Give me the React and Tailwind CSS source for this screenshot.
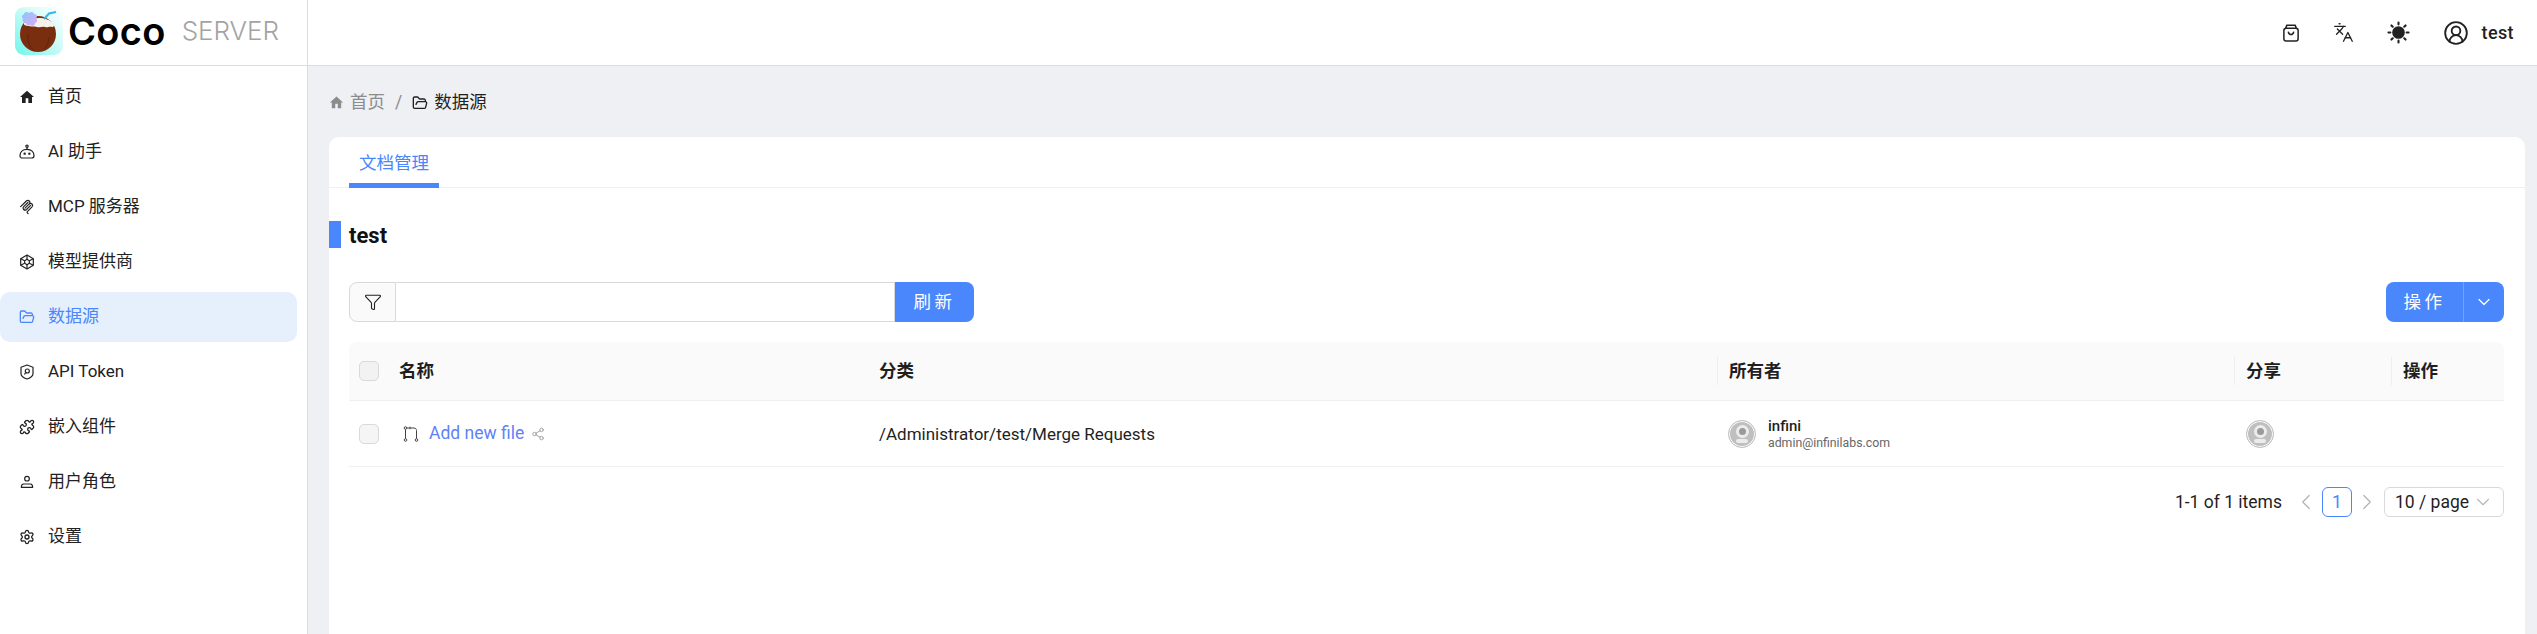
import React from 'react'
import { FolderOpen, Settings, Languages, CircleUserRound, Share2, ChevronLeft, ChevronRight, ChevronDown, Funnel, Puzzle } from 'lucide-react'

const FONT = 'font-["Roboto","Noto_Sans_CJK_SC",sans-serif]'

const HomeIcon = ({ className }) => (
  <svg viewBox="0 0 24 24" className={className} fill="currentColor">
    <path d="M10 21v-7h4v7h5.500v-9H22.500L12 2.500 1.500 12h3v9z" />
  </svg>
)

const BotIcon = ({ className }) => (
  <svg viewBox="0 0 24 24" className={className} fill="none" stroke="currentColor" strokeWidth="1.800">
    <circle cx="12" cy="3.500" r="1.700" />
    <path d="M12 5.200v2.800" />
    <path d="M5 21a3.500 3.500 0 0 1-3.500-3.500C1.500 12 5.500 8 12 8s10.500 4 10.500 9.500A3.500 3.500 0 0 1 19 21z" strokeLinejoin="round" />
    <circle cx="8.500" cy="14.500" r="1.800" fill="currentColor" stroke="none" />
    <circle cx="15.500" cy="14.500" r="1.800" fill="currentColor" stroke="none" />
  </svg>
)

const McpIcon = ({ className }) => (
  <svg viewBox="0 0 24 24" className={className} fill="none" stroke="currentColor" strokeWidth="1.800" strokeLinecap="round" strokeLinejoin="round">
    <path d="M2.500 11.500 11 3c1.300-1.200 3.200-1.200 4.400 0 1.200 1.200 1.200 3 0 4.300L9 13.700" />
    <path d="M15.400 7.300c1.300-1 3-.9 4.100.200 1.200 1.200 1.200 3 0 4.300L12.500 19c-.5.500-.5 1.200 0 1.700l1.200 1.200" />
    <path d="M13.300 5.200 7 11.500c-1.200 1.200-1.200 3 0 4.300 1.200 1.200 3 1.200 4.300 0l6.100-6.200" />
  </svg>
)

const ModelIcon = ({ className }) => (
  <svg viewBox="0 0 24 24" className={className} fill="none" stroke="currentColor" strokeWidth="1.800" strokeLinejoin="round">
    <path d="M12 1.500 21.500 7v10L12 22.500 2.500 17V7z" />
    <path d="M12 8 15.500 10v4L12 16l-3.500-2v-4z" />
    <path d="M12 1.500V8M21.500 7l-6 3M21.500 17l-6-3M12 22.500V16M2.500 17l6-3M2.500 7l6 3" />
  </svg>
)

const TokenIcon = ({ className }) => (
  <svg viewBox="0 0 24 24" className={className} fill="none" stroke="currentColor" strokeWidth="1.800" strokeLinejoin="round" strokeLinecap="round">
    <path d="M12 1.500 21 4.800v9.700c0 3.500-4 6.300-9 8-5-1.700-9-4.500-9-8V4.800z" />
    <circle cx="12.500" cy="10.500" r="3" />
    <path d="M10.300 12.700 8.500 15" />
  </svg>
)

const RoleIcon = ({ className }) => (
  <svg viewBox="0 0 24 24" className={className} fill="none" stroke="currentColor" strokeWidth="1.800">
    <circle cx="12" cy="7" r="3.500" />
    <path d="M3.500 20c0-3 1-5 3.500-5h10c2.500 0 3.500 2 3.500 5z" strokeLinejoin="round" />
  </svg>
)

const BagIcon = ({ className }) => (
  <svg viewBox="0 0 24 24" className={className} fill="none" stroke="currentColor" strokeWidth="2" strokeLinecap="round" strokeLinejoin="round">
    <rect x="2.500" y="5.500" width="19" height="17" rx="3" />
    <path d="M5 5.500 6.500 1.500h11L19 5.500" />
    <path d="M8.500 11c.5 2 2 3 3.500 3s3-1 3.500-3" />
  </svg>
)

const SunIcon = ({ className }) => (
  <svg viewBox="0 0 24 24" className={className} fill="currentColor" stroke="currentColor" strokeWidth="2.200" strokeLinecap="round">
    <circle cx="12" cy="12" r="5.500" />
    <path d="M12 1.500v2M12 20.500v2M1.500 12h2M20.500 12h2M4.600 4.600 6 6M18 18l1.400 1.400M4.600 19.400 6 18M18 6l1.400-1.400" fill="none" />
  </svg>
)

const MergeIcon = ({ className }) => (
  <svg viewBox="0 0 16 16" className={className} fill="none" stroke="currentColor" strokeWidth="1">
    <circle cx="2.500" cy="2" r="1.300" />
    <circle cx="2.500" cy="14" r="1.300" />
    <circle cx="13.500" cy="14" r="1.300" />
    <path d="M2.500 3.300v9.400M13.500 12.700V4.500c0-1.500-1-2.500-2.500-2.500H3.800" />
    <path d="M7 .7v2.600" />
  </svg>
)

const Logo = () => (
  <svg viewBox="0 0 48 48" className="h-12 w-12 shrink-0">
    <defs>
      <linearGradient id="logoBg" x1="0" y1="1" x2="1" y2="0">
        <stop offset="0" stopColor="#6ff5ea" />
        <stop offset="0.6" stopColor="#d5fbf8" />
        <stop offset="1" stopColor="#ffffff" />
      </linearGradient>
      <linearGradient id="logoFlower" x1="0" y1="0" x2="1" y2="1">
        <stop offset="0" stopColor="#8ec8fb" />
        <stop offset="1" stopColor="#d9a8f7" />
      </linearGradient>
    </defs>
    <rect x="0" y="0" width="48" height="48" rx="9" fill="url(#logoBg)" />
    <circle cx="23" cy="27" r="18" fill="#7a2e10" />
    <path d="M9 16c4-3 9-5 15-5 6 0 11 2 14 5 2 2 1 4-1 4-3-1-4 1-7 0-3-1-5 1-8 0s-5 0-8-1c-3 0-6-1-5-3z" fill="#f6f1ea" />
    <path d="M19 44c-5-5-7-11-6-17M29 43c3-4 5-8 5-13" stroke="#5b200a" strokeWidth="0.8" fill="none" />
    <path d="M9 7c1-3 4-2 5-1 2-2 5-1 5 1 3 0 4 3 2 4 2 2 1 5-1 5 0 3-3 4-5 2-2 1-4 0-4-2-3 0-4-3-3-4-2-2-1-4 1-5z" fill="url(#logoFlower)" />
    <path d="M29 12 34 6.500 41 5" stroke="#35b8f0" strokeWidth="2" fill="none" />
  </svg>
)

const Avatar = () => (
  <div className="relative flex h-7 w-7 items-center justify-center overflow-hidden rounded-full border border-[#c4c4c4] bg-[#bfbfbf] ring-1 ring-white ring-inset">
    <div className="mb-1 h-[13px] w-[13px] rounded-full border-[3px] border-[#ececec] bg-[#9a9a9a]" />
    <div className="absolute bottom-1 h-1 w-3 rounded-sm bg-[#ececec]" />
  </div>
)

const menu = [
  { label: '首页', icon: HomeIcon },
  { label: 'AI 助手', icon: BotIcon },
  { label: 'MCP 服务器', icon: McpIcon },
  { label: '模型提供商', icon: ModelIcon },
  { label: '数据源', icon: FolderOpen, active: true },
  { label: 'API Token', icon: TokenIcon },
  { label: '嵌入组件', icon: Puzzle },
  { label: '用户角色', icon: RoleIcon },
  { label: '设置', icon: Settings },
]

const App = () => {
  return (
    <div className={`flex h-[634px] w-full overflow-hidden bg-[#eef0f4] text-[#1f1f1f] ${FONT}`}>
      {/* Sidebar */}
      <aside className="flex w-[308px] shrink-0 flex-col border-r border-[#dcdcdc] bg-white">
        <div className="flex h-[66px] shrink-0 items-center border-b border-[#dcdcdc] pb-[3px] pl-[15px]">
          <Logo />
          <span className="ml-[5px] font-['Inter',sans-serif] text-[38px] leading-none font-semibold tracking-[0.3px] text-black">Coco</span>
          <span className="ml-[16px] font-['Inter',sans-serif] text-[26px] leading-none font-light text-[#a3a3a3]">SERVER</span>
        </div>
        <nav className="flex flex-col gap-[5px] pt-[6px] pr-[10px]">
          {menu.map((item) => (
            <div
              key={item.label}
              className={`flex h-[50px] items-center gap-[13px] rounded-[10px] pl-[19px] text-[17px] ${
                item.active ? 'bg-[#e6f0fd] text-[#4a86fc]' : 'text-[#222]'
              }`}
            >
              <item.icon className="h-4 w-4 shrink-0" />
              <span>{item.label}</span>
            </div>
          ))}
        </nav>
      </aside>

      <div className="flex min-w-0 flex-1 flex-col">
        {/* Header */}
        <header className="flex h-[66px] shrink-0 items-center justify-end border-b border-[#dcdcdc] bg-white pr-[23px]">
          <BagIcon className="h-[18px] w-[18px] text-[#222]" />
          <Languages className="ml-[33px] h-[21px] w-[21px] text-[#222]" strokeWidth={1.5} />
          <SunIcon className="ml-[33px] h-[23px] w-[23px] text-[#222]" />
          <CircleUserRound className="ml-[33px] h-[26px] w-[26px] text-[#222]" strokeWidth={1.7} />
          <span className="ml-[13px] text-[18px] font-medium tracking-[0.4px]">test</span>
        </header>

        <main className="flex min-h-0 flex-1 flex-col pr-3 pl-[21px]">
          {/* Breadcrumb */}
          <div className="flex h-[71px] shrink-0 items-center pt-[2px] text-[17.5px]">
            <HomeIcon className="h-[15px] w-[15px] text-[#8c8c8c]" />
            <span className="ml-[6px] text-[#8c8c8c]">首页</span>
            <span className="mx-[10px] text-[#8c8c8c]">/</span>
            <FolderOpen className="h-4 w-4" strokeWidth={2} />
            <span className="ml-[6px]">数据源</span>
          </div>

          {/* Card */}
          <section className="flex-1 rounded-t-[10px] bg-white">
            <div className="flex h-[51px] border-b border-[#f0f0f0] pl-5">
              <div className="flex h-[51px] w-[90px] items-center justify-center border-b-[5px] border-[#4a86fc] pt-[6px] text-[17.5px] text-[#4a86fc]">
                文档管理
              </div>
            </div>

            <div className="mt-[33px] flex h-[27px] items-center gap-2">
              <div className="h-[27px] w-3 bg-[#4a86fc]" />
              <h2 className="pt-[1px] text-[22px] font-bold text-[#111]">test</h2>
            </div>

            <div className="pr-[21px] pl-5">
              {/* Toolbar */}
              <div className="mt-[34px] flex h-10 items-stretch justify-between">
                <div className="flex">
                  <div className="flex w-[47px] items-center justify-center rounded-l-lg border border-[#d9d9d9] bg-[#fafafa]">
                    <Funnel className="h-[18px] w-[18px] text-[#222]" strokeWidth={1.5} />
                  </div>
                  <input className="w-[499px] border-y border-r border-[#d9d9d9] outline-none" />
                  <button className="w-[79px] rounded-r-lg bg-[#4a86fc] text-[17.5px] tracking-[0.2em] text-white">刷新</button>
                </div>
                <div className="flex h-10 w-[118px] rounded-lg bg-[#4a86fc] text-white">
                  <button className="w-[78px] border-r border-[#6ea3ff] text-[17.5px] tracking-[0.2em]">操作</button>
                  <button className="flex flex-1 items-center justify-center">
                    <ChevronDown className="h-5 w-5" strokeWidth={1.5} />
                  </button>
                </div>
              </div>

              {/* Table */}
              <div className="mt-5 grid grid-cols-[50px_480px_838px_517px_157px_113px] text-[17.5px]">
                <div className="flex h-[59px] items-center rounded-tl-lg border-b border-[#f0f0f0] bg-[#fafafa] pl-[10px]">
                  <div className="h-5 w-5 rounded-[5px] border border-[#d9d9d9] bg-[#f2f2f2]" />
                </div>
                <div className="flex h-[59px] items-center border-b border-[#f0f0f0] bg-[#fafafa] font-semibold">名称</div>
                <div className="flex h-[59px] items-center border-b border-[#f0f0f0] bg-[#fafafa] font-semibold">分类</div>
                {['所有者', '分享', '操作'].map((title, i) => (
                  <div key={title} className={`flex h-[59px] items-center border-b border-[#f0f0f0] bg-[#fafafa] font-semibold ${i === 2 ? 'rounded-tr-lg' : ''}`}>
                    <span className="flex h-7 items-center border-l border-[#eeeeee] pl-[11px]">{title}</span>
                  </div>
                ))}

                <div className="flex h-[66px] items-center border-b border-[#f0f0f0] pl-[10px]">
                  <div className="h-5 w-5 rounded-[5px] border border-[#d9d9d9] bg-[#f5f5f5]" />
                </div>
                <div className="flex h-[66px] items-center border-b border-[#f0f0f0] pl-1">
                  <MergeIcon className="h-4 w-4 text-[#444]" />
                  <span className="ml-[10px] text-[#5f82f8]">Add new file</span>
                  <Share2 className="ml-[7px] h-[14px] w-[14px] text-[#999]" strokeWidth={1.5} />
                </div>
                <div className="flex h-[66px] items-center border-b border-[#f0f0f0] pt-[2px] text-[17px]">/Administrator/test/Merge Requests</div>
                <div className="flex h-[66px] items-center gap-3 border-b border-[#f0f0f0] pl-[11px]">
                  <Avatar />
                  <div className="flex flex-col">
                    <span className="text-[15px] leading-[18px] font-medium">infini</span>
                    <span className="text-[12.3px] leading-4 text-[#666]">admin@infinilabs.com</span>
                  </div>
                </div>
                <div className="flex h-[66px] items-center border-b border-[#f0f0f0] pl-3">
                  <Avatar />
                </div>
                <div className="h-[66px] border-b border-[#f0f0f0]" />
              </div>

              {/* Pagination */}
              <div className="mt-5 flex h-[30px] items-center justify-end text-[17.5px]">
                <span>1-1 of 1 items</span>
                <ChevronLeft className="ml-[11px] h-[26px] w-[26px] text-[#b5b5b5]" strokeWidth={1.2} />
                <div className="ml-[3px] flex h-[30px] w-[30px] items-center justify-center rounded-md border border-[#4a86fc] text-[#4a86fc]">1</div>
                <ChevronRight className="ml-[2px] h-[26px] w-[26px] text-[#b5b5b5]" strokeWidth={1.2} />
                <div className="ml-1 flex h-[30px] w-[120px] items-center justify-between rounded-md border border-[#d9d9d9] pr-[9px] pl-[10px]">
                  <span>10 / page</span>
                  <ChevronDown className="h-[22px] w-[22px] text-[#b5b5b5]" strokeWidth={1.2} />
                </div>
              </div>
            </div>
          </section>
        </main>
      </div>
    </div>
  )
}

export default App
